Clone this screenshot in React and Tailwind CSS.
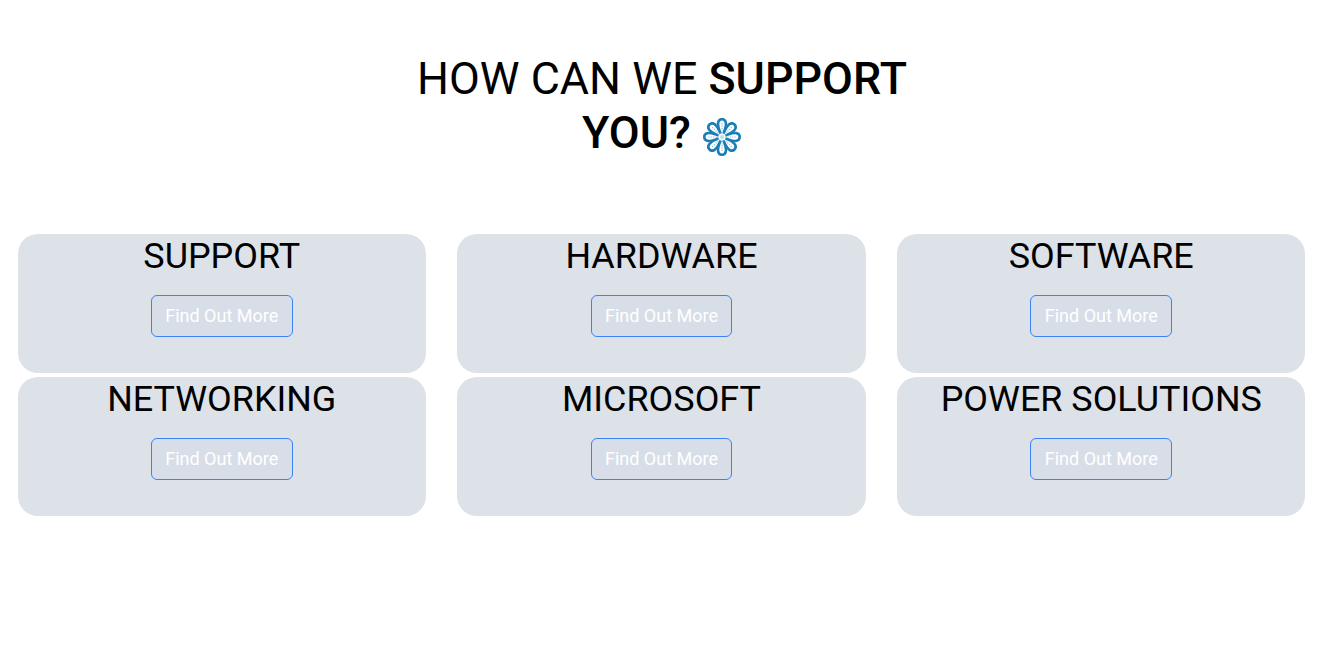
const cards = ["SUPPORT", "HARDWARE", "SOFTWARE", "NETWORKING", "MICROSOFT", "POWER SOLUTIONS"];

function FlowerIcon() {
  const petals = [0, 45, 90, 135, 180, 225, 270, 315];
  return (
    <svg viewBox="0 0 40 40" className="inline-block h-[40px] w-[40px] align-[-9px]" fill="none">
      {petals.map((a) => (
        <path
          key={a}
          transform={`rotate(${a} 20 20)`}
          d="M20 20 C18.5 15.5 14.8 11.5 14.8 6.6 C14.8 3 17 1 20 1 C23 1 25.2 3 25.2 6.6 C25.2 11.5 21.5 15.5 20 20 Z"
          fill="#1a7fb5"
        />
      ))}
      {petals.map((a) => (
        <g key={a} transform={`rotate(${a} 20 20)`}>
          <path
            d="M20 17 C19 13.5 17.3 10.5 17.3 7 C17.3 5 18.4 3.6 20 3.6 C21.6 3.6 22.7 5 22.7 7 C22.7 10.5 21 13.5 20 17 Z"
            fill="#fff"
          />
          <line x1="20" y1="17" x2="20" y2="6" stroke="#8cc2de" strokeWidth="1.2" strokeDasharray="1.2 1.2" />
        </g>
      ))}
      <circle cx="20" cy="20" r="3.6" fill="#fff" />
      <circle cx="20" cy="20" r="2" fill="#bcdcec" />
    </svg>
  );
}

function Card({ title }) {
  return (
    <div className="flex h-[139px] flex-col items-center rounded-[20px] bg-[#dde1e8] text-center">
      <h2 className="text-[35.92px] leading-[45px] font-normal text-black">{title}</h2>
      <button className="mt-[16px] h-[42px] w-[141.6px] rounded-[6px] border border-[#3b82f6] bg-[#d7dee8] pb-[2px] text-[18px] text-white">
        Find Out More
      </button>
    </div>
  );
}

export default function App() {
  return (
    <div className="min-h-[670px] bg-white pt-[52px] pr-[19.6px] pl-[17.6px] font-['Roboto',sans-serif]">
      <h1 className="mx-auto w-[560px] pl-[1px] text-center text-[44.8px] leading-[54px] font-normal text-black">
        HOW CAN WE <span className="font-medium">SUPPORT YOU?</span> <FlowerIcon />
      </h1>
      <div className="mt-[74px] grid grid-cols-3 gap-x-[31.5px] gap-y-[4px]">
        {cards.map((c) => (
          <Card key={c} title={c} />
        ))}
      </div>
    </div>
  );
}
